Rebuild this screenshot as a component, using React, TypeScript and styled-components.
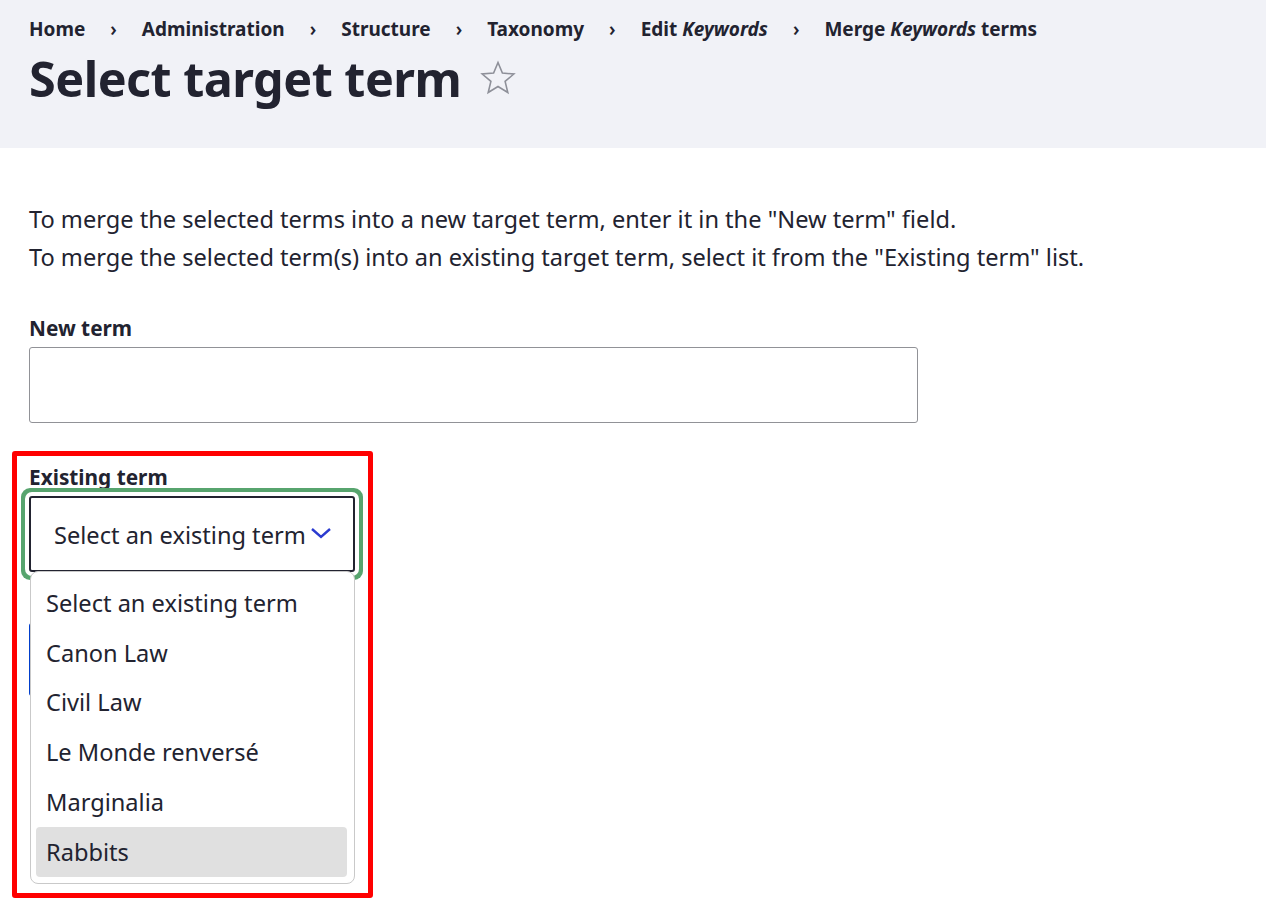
import { FunctionComponent } from 'react';
import styled, { createGlobalStyle } from 'styled-components';

const GlobalStyle = createGlobalStyle`
  body {
    margin: 0;
    background: #fff;
    font-family: 'Noto Sans', 'Open Sans', sans-serif;
    color: #222330;
  }
`;

const Page = styled.div`
  min-height: 100vh;
`;

const PageHeader = styled.header`
  box-sizing: border-box;
  height: 148px;
  padding: 15px 29px 0;
  background: #f1f2f7;
`;

const Breadcrumb = styled.ol`
  display: flex;
  margin: 0;
  padding: 0;
  list-style: none;
  font-size: 19px;
  font-weight: 700;
  line-height: 28px;
`;

const Crumb = styled.li`
  display: flex;
  align-items: center;
  white-space: pre;

  & + &::before {
    content: '›';
    font-weight: 600;
    margin: 0 25px 0 25px;
  }
`;

const Title = styled.h1`
  display: flex;
  align-items: center;
  gap: 18px;
  margin: 4px 0 0;
  font-size: 48.5px;
  font-weight: 700;
  line-height: 62px;
  letter-spacing: -0.5px;
`;

const Main = styled.main`
  padding: 52px 29px 0;
`;

const Description = styled.p`
  margin: 0 0 38px;
  font-size: 23.6px;
  line-height: 38px;
`;

const FormItem = styled.div`
  position: relative;
  margin-bottom: 40px;
`;

const Label = styled.label`
  display: block;
  margin-bottom: 5px;
  font-size: 20.8px;
  font-weight: 700;
  line-height: 28px;
`;

const TextInput = styled.input`
  box-sizing: border-box;
  display: block;
  width: 889px;
  height: 76px;
  border: 1px solid #919297;
  border-radius: 3px;
  font: inherit;
  font-size: 23.6px;
`;

const Annotation = styled.div`
  position: absolute;
  left: -17px;
  top: -12px;
  width: 361px;
  height: 447px;
  box-sizing: border-box;
  border: 5px solid #ff0000;
  border-radius: 3px;
  pointer-events: none;
  z-index: 3;
`;

const SelectWrap = styled.div`
  position: relative;
  width: 326px;
`;

const SelectBox = styled.div`
  box-sizing: border-box;
  display: flex;
  align-items: center;
  height: 76px;
  padding: 2px 0 0 23px;
  border: 2px solid #222330;
  border-radius: 3px;
  background: #fff;
  box-shadow: 0 0 0 4px #fff, 0 0 0 8px #57a46e;
  font-size: 23.6px;

  svg {
    margin: -4px 0 0 4px;
    flex: none;
  }
`;

const Listbox = styled.ul`
  position: absolute;
  top: calc(100% - 1px);
  left: 1px;
  box-sizing: border-box;
  width: 325px;
  margin: 0;
  padding: 6px 7px 6px 5px;
  list-style: none;
  background: #fff;
  border: 1px solid #c9c9c9;
  border-radius: 8px;
  z-index: 2;
`;

const Option = styled.li<{ $active?: boolean }>`
  height: 49.8px;
  display: flex;
  align-items: center;
  padding-left: 10px;
  border-radius: 4px;
  font-size: 23.6px;
  background: ${({ $active }) => ($active ? '#e0e0e0' : 'transparent')};
`;

const Actions = styled.div`
  margin-top: 51px;
`;

const Button = styled.button`
  display: block;
  width: 160px;
  height: 73px;
  border: 0;
  border-radius: 3px;
  background: #003ecc;
`;

const Star = () => (
  <svg width='38' height='38' viewBox='0 0 38 38' aria-hidden='true'>
    <path
      d='M19 3.5l4.4 10.6 11.4.9-8.7 7.4 2.7 11.1L19 27.5l-9.8 6 2.7-11.1-8.7-7.4 11.4-.9z'
      fill='none'
      stroke='#8e9099'
      strokeWidth='1.6'
      strokeLinejoin='miter'
    />
  </svg>
);

const Chevron = () => (
  <svg width='22' height='14' viewBox='0 0 22 14' aria-hidden='true'>
    <path d='M2 3l9 8 9-8' fill='none' stroke='#2b3bd0' strokeWidth='2.4' />
  </svg>
);

const terms = ['Select an existing term', 'Canon Law', 'Civil Law', 'Le Monde renversé', 'Marginalia', 'Rabbits'];

const App: FunctionComponent = () => (
  <Page>
    <GlobalStyle />
    <PageHeader>
      <Breadcrumb>
        <Crumb>Home</Crumb>
        <Crumb>Administration</Crumb>
        <Crumb>Structure</Crumb>
        <Crumb>Taxonomy</Crumb>
        <Crumb>
          Edit <em>Keywords</em>
        </Crumb>
        <Crumb>
          Merge <em>Keywords</em> terms
        </Crumb>
      </Breadcrumb>
      <Title>
        Select target term
        <Star />
      </Title>
    </PageHeader>
    <Main>
      <Description>
        To merge the selected terms into a new target term, enter it in the "New term" field.
        <br />
        To merge the selected term(s) into an existing target term, select it from the "Existing term" list.
      </Description>
      <FormItem>
        <Label>New term</Label>
        <TextInput type='text' />
      </FormItem>
      <FormItem>
        <Annotation />
        <Label>Existing term</Label>
        <SelectWrap>
          <SelectBox>
            Select an existing term
            <Chevron />
          </SelectBox>
          <Listbox>
            {terms.map((term, index) => (
              <Option key={index} $active={term === 'Rabbits'}>
                {term}
              </Option>
            ))}
          </Listbox>
        </SelectWrap>
        <Actions>
          <Button aria-label='Merge' />
        </Actions>
      </FormItem>
    </Main>
  </Page>
);

export default App;
